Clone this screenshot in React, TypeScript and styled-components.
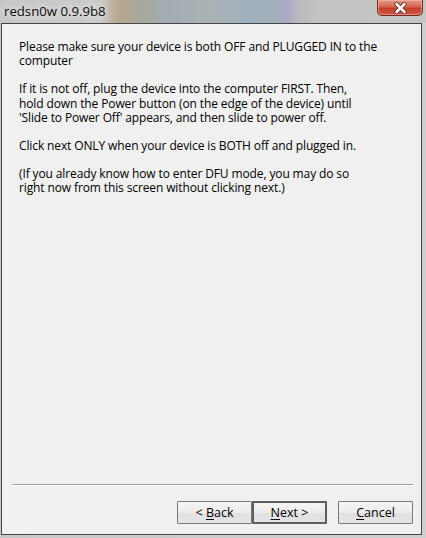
import React from 'react';
import styled, { createGlobalStyle } from 'styled-components';

const GlobalStyle = createGlobalStyle`
  html, body {
    margin: 0;
    padding: 0;
    background: #c4c4c4;
  }
`;

const Window = styled.div`
  width: 426px;
  height: 538px;
  display: flex;
  flex-direction: column;
  box-sizing: border-box;
  padding: 0 4px 3px 1px;
  background: linear-gradient(90deg, #c9c9c9 0%, #cfcfcf 100%);
  font-family: 'Open Sans', 'Noto Sans', sans-serif;
`;

const TitleBar = styled.div`
  height: 23px;
  flex-shrink: 0;
  display: flex;
  align-items: flex-start;
  margin: 0 -4px 0 -1px;
  background: linear-gradient(
    90deg,
    #c7c7c7 0px,
    #cacaca 100px,
    #b9a78e 118px,
    #a8a89e 140px,
    #a2adb3 170px,
    #aab2b4 210px,
    #9fb0bd 250px,
    #a3b0ba 278px,
    #aaa8c6 287px,
    #b8b8bf 296px,
    #c3c3c3 320px,
    #c6c6c6 426px
  );
`;

const Title = styled.span`
  margin: 3px 0 0 4px;
  padding: 0 3px 0 0;
  font-family: 'Open Sans', 'Noto Sans', sans-serif;
  font-size: 13.2px;
  line-height: 17px;
  color: #0c0c0c;
  text-shadow: 0 0 6px #ececec, 0 0 10px #e6e6e6;
`;

const CloseButton = styled.div`
  margin-left: auto;
  margin-right: 3px;
  width: 46px;
  height: 16px;
  box-sizing: border-box;
  border: 1px solid #6e2a22;
  border-top: none;
  border-radius: 0 0 5px 5px;
  background: linear-gradient(180deg, #e29a88 0%, #d6634f 45%, #c23e2a 55%, #cf5a44 100%);
  box-shadow: inset 0 0 0 1px rgba(255, 200, 190, 0.45);
  display: flex;
  align-items: center;
  justify-content: center;
`;

const Client = styled.div`
  flex: 1;
  display: flex;
  flex-direction: column;
  border: 1px solid #454545;
  background: #f0f0f0;
`;

const Message = styled.div`
  padding: 16px 0 0 17px;
  font-size: 12px;
  line-height: 14.2px;
  color: #000;
  letter-spacing: -0.12px;
`;

const Para = styled.p`
  margin: 0 0 14px 0;
`;

const Separator = styled.div`
  margin: auto 8px 0 10px;
  height: 1px;
  background: #a0a0a0;
  border-bottom: 1px solid #ffffff;
`;

const ButtonRow = styled.div`
  display: flex;
  justify-content: flex-end;
  padding: 15px 8px 10px 0;
`;

const Button = styled.button<{ $default?: boolean; $gap?: boolean }>`
  width: 75px;
  height: 23px;
  box-sizing: border-box;
  margin: 0 0 0 ${p => (p.$gap ? '11px' : '0')};
  padding: 0;
  border: ${p => (p.$default ? '2px solid #5e5e5e' : '1px solid #7a7a7a')};
  border-radius: 1px;
  background: linear-gradient(180deg, #f4f4f4 0%, #ececec 50%, #e0e0e0 51%, #e4e4e4 100%);
  font-family: 'Open Sans', 'Noto Sans', sans-serif;
  font-size: 12.5px;
  color: #000;
  u {
    text-decoration: underline;
    text-underline-offset: 2px;
  }
`;

const CloseIcon = () => (
  <svg width="15" height="12" viewBox="0 0 15 12">
    <path d="M3.5 2 L11.5 10 M11.5 2 L3.5 10" stroke="#5b1f17" strokeWidth="4.2" strokeLinecap="round" />
    <path d="M3.5 2 L11.5 10 M11.5 2 L3.5 10" stroke="#ffffff" strokeWidth="2.6" strokeLinecap="round" />
  </svg>
);

export default function App() {
  return (
    <>
      <GlobalStyle />
      <Window>
        <TitleBar>
          <Title>redsn0w 0.9.9b8</Title>
          <CloseButton>
            <CloseIcon />
          </CloseButton>
        </TitleBar>
        <Client>
          <Message>
            <Para>
              Please make sure your device is both OFF and PLUGGED IN to the
              <br />
              computer
            </Para>
            <Para>
              If it is not off, plug the device into the computer FIRST. Then,
              <br />
              hold down the Power button (on the edge of the device) until
              <br />
              'Slide to Power Off' appears, and then slide to power off.
            </Para>
            <Para>Click next ONLY when your device is BOTH off and plugged in.</Para>
            <Para>
              (If you already know how to enter DFU mode, you may do so
              <br />
              right now from this screen without clicking next.)
            </Para>
          </Message>
          <Separator />
          <ButtonRow>
            <Button>
              &lt; <u>B</u>ack
            </Button>
            <Button $default>
              <u>N</u>ext &gt;
            </Button>
            <Button $gap>
              <u>C</u>ancel
            </Button>
          </ButtonRow>
        </Client>
      </Window>
    </>
  );
}
